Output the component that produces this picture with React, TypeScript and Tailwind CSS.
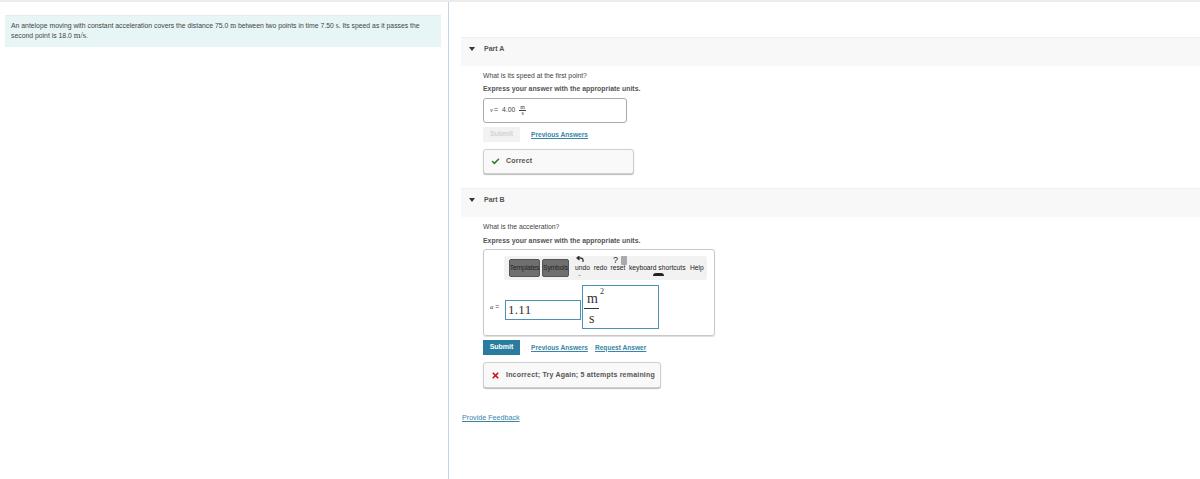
import { Check, X } from 'lucide-react';

const FONT = "font-['Liberation_Sans',Arial,sans-serif]";
const SERIF = "font-['Liberation_Serif','Times_New_Roman',serif]";

function PartHeader({ label }: { label: string }) {
  return (
    <div className="h-[29px] bg-[#f8f8f8] flex items-start pt-[6px] pl-[8px] border-t border-[#f0f0f0]">
      <svg width="6" height="4" viewBox="0 0 6 4" className="mr-[9px] mt-[3px] shrink-0">
        <path d="M0 0h6L3 4z" fill="#333" />
      </svg>
      <span className="text-[7px] leading-[10px] font-bold text-[#555]">{label}</span>
    </div>
  );
}

function Toolbar() {
  return (
    <div className="ml-[20px] mt-[6px] w-[203px] h-[24px] bg-[#f2f2f2] rounded-[3px] flex items-center pl-[5px] text-[6.7px] text-[#222]">
      <div className="w-[31px] h-[18px] bg-[#6f6f6f] border border-[#555] rounded-[2px] flex items-center justify-center whitespace-nowrap tracking-[-0.1px]">Templates</div>
      <div className="ml-[2px] w-[27px] h-[18px] bg-[#6f6f6f] border border-[#555] rounded-[2px] flex items-center justify-center whitespace-nowrap tracking-[-0.1px]">Symbols</div>
      <div className="relative ml-[6px] w-[15px] text-center">
        undo
        <svg width="8" height="7" viewBox="0 0 8 7" className="absolute left-[1px] -top-[7px]">
          <path d="M7 6V4Q7 2 4 2H2M3.5 0 1 2l2.500 2" fill="none" stroke="#333" strokeWidth="1.300" />
        </svg>
        <span className="absolute left-[3px] top-[9px] text-[5px] text-[#777]">~</span>
      </div>
      <div className="ml-[3px] w-[15px] text-center">redo</div>
      <div className="relative ml-[2px] w-[16px] text-center">
        reset
        <span className="absolute left-[3px] -top-[8px] text-[9px] leading-[10px]">?</span>
        <span className="absolute left-[11px] -top-[7px] w-[6px] h-[9px] bg-[#aaa] rounded-[1px]" />
      </div>
      <div className="ml-[3px] w-[57px] whitespace-nowrap relative">
        keyboard shortcuts
        <span className="absolute left-[24px] top-[10px] w-[11px] h-[3px] bg-[#222] rounded-t-full" />
      </div>
      <div className="ml-[4px]">Help</div>
    </div>
  );
}

export default function App() {
  return (
    <div className={`${FONT} h-[479px] w-[1200px] overflow-hidden bg-white flex border-t-[2px] border-[#ececec] text-[#333]`}>
      <aside className="w-[449px] shrink-0 border-r border-[#c5d5e6] pl-[5px] pr-[7px] pt-[13px]">
        <div className="h-[32px] bg-[#e8f5f6] border-t border-[#eaeaea] pl-[6px] pt-[5px] text-[6.85px] leading-[9.5px] text-[#444] whitespace-nowrap">
          An antelope moving with constant acceleration covers the distance 75.0 <span className={`${SERIF} text-[7.5px]`}>m</span> between two points in time 7.50 <span className={`${SERIF} text-[7.5px]`}>s</span>. Its speed as it passes the<br />second point is 18.0 <span className={`${SERIF} text-[8.5px]`}>m/s</span>.
        </div>
      </aside>

      <main className="flex-1 pl-[12px] pt-[35px]">
        <PartHeader label="Part A" />
        <div className="pl-[22px]">
          <p className="mt-[5px] text-[6.8px] leading-[10px] text-[#444]">What is its speed at the first point?</p>
          <p className="mt-[3px] text-[6.9px] leading-[10px] font-bold text-[#555]">Express your answer with the appropriate units.</p>
          <div className="mt-[4px] w-[144px] h-[25px] border border-[#aaa] rounded-[3px] flex items-center pl-[6px] text-[6.8px] text-[#444]">
            <span className={`${SERIF} italic`}>v</span>
            <span className="ml-[1px]">=</span>
            <span className="ml-[4px]">4.00</span>
            <span className={`${SERIF} ml-[4px] flex flex-col items-center text-[6px] leading-[5px]`}>
              <span className="border-b border-[#444] px-[1px]">m</span>
              <span>s</span>
            </span>
          </div>
          <div className="mt-[4px] flex items-center h-[15px]">
            <div className="w-[37px] h-[15px] bg-[#f2f2f2] text-[#d2d2d2] text-[6.8px] font-bold flex items-center justify-center">Submit</div>
            <a className="ml-[11px] text-[6.6px] font-bold text-[#3a85a8] underline">Previous Answers</a>
          </div>
          <div className="mt-[7px] w-[151px] h-[25px] bg-[#f9f9f9] border border-[#cfcfcf] rounded-[3px] shadow-[0_1px_1px_#bbb] flex items-center pl-[7px]">
            <Check size={9} strokeWidth={4} className="text-[#2a7d2e] shrink-0" />
            <span className="ml-[6px] text-[7px] font-bold tracking-[0.2px] text-[#555]">Correct</span>
          </div>
        </div>

        <div className="mt-[14px]">
          <PartHeader label="Part B" />
        </div>
        <div className="pl-[22px]">
          <p className="mt-[5px] text-[6.8px] leading-[10px] text-[#444]">What is the acceleration?</p>
          <p className="mt-[4px] text-[6.9px] leading-[10px] font-bold text-[#555]">Express your answer with the appropriate units.</p>
          <div className="mt-[3px] w-[232px] h-[87px] border border-[#c8c8c8] rounded-[3px] shadow-[0_1px_1px_#ddd]">
            <Toolbar />
            <div className="mt-[5px] flex items-start pl-[6px]">
              <span className="w-[15px] mt-[17px] text-[6.8px] leading-[10px] text-[#444]">
                <span className={`${SERIF} italic`}>a</span> =
              </span>
              <div className={`${SERIF} mt-[15px] w-[76px] h-[20px] border border-[#4a93b5] pl-[2px] text-[13px] leading-[18px] tracking-[0.3px] text-[#333]`}>1.11</div>
              <div className={`${SERIF} relative w-[77px] h-[44px] ml-[1px] border border-[#4a93b5] text-[14px] text-[#333]`}>
                <span className="absolute left-[4px] top-[6px] leading-[14px]">m</span>
                <span className="absolute left-[17px] top-[1px] text-[8px] leading-[10px]">2</span>
                <span className="absolute left-[1px] top-[22px] w-[15px] h-px bg-[#333]" />
                <span className="absolute left-[6px] top-[26px] leading-[14px]">s</span>
              </div>
            </div>
          </div>
          <div className="mt-[4px] flex items-center h-[15px]">
            <div className="w-[37px] h-[15px] bg-[#2a7ba0] text-white text-[7px] font-bold flex items-center justify-center">Submit</div>
            <a className="ml-[11px] text-[6.6px] font-bold text-[#3a85a8] underline">Previous Answers</a>
            <a className="ml-[7px] text-[6.6px] font-bold text-[#3a85a8] underline">Request Answer</a>
          </div>
          <div className="mt-[7px] w-[178px] h-[26px] bg-[#f9f9f9] border border-[#cfcfcf] rounded-[3px] shadow-[0_1px_1px_#bbb] flex items-center pl-[7px]">
            <X size={9} strokeWidth={4.500} className="text-[#d0121c] shrink-0" />
            <span className="ml-[6px] text-[7px] font-bold tracking-[0.2px] whitespace-nowrap text-[#555]">Incorrect; Try Again; 5 attempts remaining</span>
          </div>
        </div>
        <a className="block mt-[25px] pl-[1px] text-[7.15px] leading-[10px] text-[#3a85a8] underline">Provide Feedback</a>
      </main>
    </div>
  );
}
